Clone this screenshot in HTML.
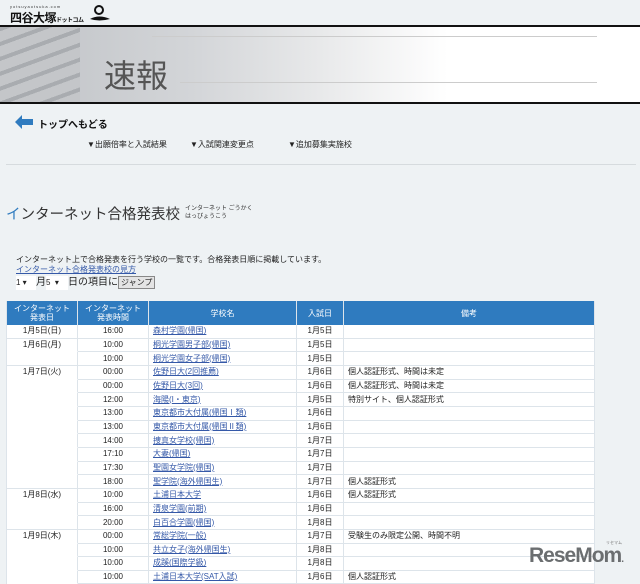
<!DOCTYPE html>
<html><head><meta charset="utf-8"><style>
body{margin:0;width:640px;height:584px;overflow:hidden;background:#eef2f4;font-family:"Liberation Sans","Noto Sans CJK JP",sans-serif;position:relative}
.a{position:absolute}
table{position:absolute;left:6px;top:301px;width:589px;border-collapse:separate;border-spacing:0;font-size:8px;table-layout:fixed;border-left:1px solid #dde4ea}
th{background:#2f7bbf;color:#fff;font-weight:normal;height:24px;line-height:9px;border-right:1px solid #dde4ea;padding:0}
td{background:#fff;border-right:1px solid #dde4ea;border-bottom:1px solid #dde4ea;padding:0;color:#222;white-space:nowrap;overflow:hidden;vertical-align:middle;height:12.67px;line-height:12px;box-sizing:content-box}
td.c{text-align:center}
td.l{padding-left:4px}
a{color:#3559a8;text-decoration:underline}
td.e{border-bottom-color:#fff}
</style></head><body>
<div class="a" style="left:10px;top:4px;font-size:4px;letter-spacing:1px;color:#333">yotsuyaotsuka.com</div>
<div class="a" style="left:10px;top:9px;font-size:12px;font-weight:bold;color:#111;white-space:nowrap;letter-spacing:-0.5px">四谷大塚<span style="font-size:6px">ドットコム</span></div>
<svg class="a" style="left:89px;top:4px" width="22" height="18"><circle cx="10" cy="6" r="4" fill="none" stroke="#111" stroke-width="2"/><path d="M1 15 Q10 10 21 15 Q10 18 1 15Z" fill="#111"/></svg>
<div class="a" style="left:0;top:25px;width:640px;height:2px;background:#111"></div>
<div class="a" style="left:0;top:27px;width:640px;height:75px;background:linear-gradient(90deg,#bfc2c6 0%,#d3d5d8 30%,#e8e9ea 50%,#fff 70%)"></div>
<div class="a" style="left:0;top:27px;width:80px;height:75px;background:repeating-linear-gradient(160deg,#a9acb0 0 4px,#c4c6c9 4px 14px)"></div>
<div class="a" style="left:152px;top:36px;width:445px;height:1px;background:#ccc"></div>
<div class="a" style="left:180px;top:82px;width:417px;height:1px;background:#ccc"></div>
<div class="a" style="left:104px;top:56px;font-size:32px;color:#555;line-height:40px">速報</div>
<div class="a" style="left:0;top:102px;width:640px;height:2px;background:#111"></div>
<svg class="a" style="left:15px;top:114px" width="18" height="16"><path d="M0 8 L7 1 L7 5 L18 5 L18 11 L7 11 L7 15Z" fill="#2f7bbf"/></svg>
<div class="a" style="left:38px;top:116px;font-size:10px;font-weight:bold;color:#111">トップへもどる</div>
<div class="a" style="left:87px;top:139px;font-size:8px;color:#222">▼出願倍率と入試結果</div>
<div class="a" style="left:190px;top:139px;font-size:8px;color:#222">▼入試関連変更点</div>
<div class="a" style="left:288px;top:139px;font-size:8px;color:#222">▼追加募集実施校</div>
<div class="a" style="left:6px;top:164px;width:630px;height:1px;background:#d6dbde"></div>
<div class="a" style="left:6px;top:203px;font-size:14.5px;color:#333;white-space:nowrap"><span style="color:#2f7bbf">イ</span>ンターネット合格発表校</div>
<div class="a" style="left:185px;top:205px;font-size:6px;line-height:8px;color:#333">インターネット ごうかく<br>はっぴょうこう</div>
<div class="a" style="left:16px;top:254px;font-size:8px;color:#222">インターネット上で合格発表を行う学校の一覧です。合格発表日順に掲載しています。</div>
<div class="a" style="left:16px;top:264px;font-size:8px"><a>インターネット合格発表校の見方</a></div>
<div class="a" style="left:16px;top:276px;font-size:10px;color:#222;line-height:14px;white-space:nowrap"><span style="display:inline-block;width:20px;background:#fff;font-size:8px">1 ▾</span>月<span style="display:inline-block;width:22px;background:#fff;font-size:8px">5 &nbsp;▾</span>日の項目に<span style="display:inline-block;border:1px solid #888;background:#e4e4e4;font-size:8px;line-height:11px;padding:0 2px">ジャンプ</span></div>
<table>
<colgroup><col style="width:71px"><col style="width:71px"><col style="width:148px"><col style="width:47px"><col></colgroup>
<tr><th>インターネット<br>発表日</th><th>インターネット<br>発表時間</th><th>学校名</th><th>入試日</th><th>備考</th></tr>
<tr><td class="c">1月5日(日)</td><td class="c">16:00</td><td class="l"><a>森村学園(帰国)</a></td><td class="c">1月5日</td><td class="l"></td></tr>
<tr><td class="c e">1月6日(月)</td><td class="c">10:00</td><td class="l"><a>桐光学園男子部(帰国)</a></td><td class="c">1月5日</td><td class="l"></td></tr>
<tr><td></td><td class="c">10:00</td><td class="l"><a>桐光学園女子部(帰国)</a></td><td class="c">1月5日</td><td class="l"></td></tr>
<tr><td class="c e">1月7日(火)</td><td class="c">00:00</td><td class="l"><a>佐野日大(2回推薦)</a></td><td class="c">1月6日</td><td class="l">個人認証形式、時間は未定</td></tr>
<tr><td class="e"></td><td class="c">00:00</td><td class="l"><a>佐野日大(3回)</a></td><td class="c">1月6日</td><td class="l">個人認証形式、時間は未定</td></tr>
<tr><td class="e"></td><td class="c">12:00</td><td class="l"><a>海陽(I・東京)</a></td><td class="c">1月5日</td><td class="l">特別サイト、個人認証形式</td></tr>
<tr><td class="e"></td><td class="c">13:00</td><td class="l"><a>東京都市大付属(帰国Ⅰ類)</a></td><td class="c">1月6日</td><td class="l"></td></tr>
<tr><td class="e"></td><td class="c">13:00</td><td class="l"><a>東京都市大付属(帰国Ⅱ類)</a></td><td class="c">1月6日</td><td class="l"></td></tr>
<tr><td class="e"></td><td class="c">14:00</td><td class="l"><a>捜真女学校(帰国)</a></td><td class="c">1月7日</td><td class="l"></td></tr>
<tr><td class="e"></td><td class="c">17:10</td><td class="l"><a>大妻(帰国)</a></td><td class="c">1月7日</td><td class="l"></td></tr>
<tr><td class="e"></td><td class="c">17:30</td><td class="l"><a>聖園女学院(帰国)</a></td><td class="c">1月7日</td><td class="l"></td></tr>
<tr><td></td><td class="c">18:00</td><td class="l"><a>聖学院(海外帰国生)</a></td><td class="c">1月7日</td><td class="l">個人認証形式</td></tr>
<tr><td class="c e">1月8日(水)</td><td class="c">10:00</td><td class="l"><a>土浦日本大学</a></td><td class="c">1月6日</td><td class="l">個人認証形式</td></tr>
<tr><td class="e"></td><td class="c">16:00</td><td class="l"><a>清泉学園(前期)</a></td><td class="c">1月6日</td><td class="l"></td></tr>
<tr><td></td><td class="c">20:00</td><td class="l"><a>白百合学園(帰国)</a></td><td class="c">1月8日</td><td class="l"></td></tr>
<tr><td class="c e">1月9日(木)</td><td class="c">00:00</td><td class="l"><a>常総学院(一般)</a></td><td class="c">1月7日</td><td class="l">受験生のみ限定公開、時間不明</td></tr>
<tr><td class="e"></td><td class="c">10:00</td><td class="l"><a>共立女子(海外帰国生)</a></td><td class="c">1月8日</td><td class="l"></td></tr>
<tr><td class="e"></td><td class="c">10:00</td><td class="l"><a>成蹊(国際学級)</a></td><td class="c">1月8日</td><td class="l"></td></tr>
<tr><td class="e"></td><td class="c">10:00</td><td class="l"><a>土浦日本大学(SAT入試)</a></td><td class="c">1月6日</td><td class="l">個人認証形式</td></tr>
</table>
<div class="a" style="left:529px;top:544px;font-size:21px;font-weight:bold;color:#6b6e70;letter-spacing:-1px">ReseMom<span style="font-size:10px">.</span></div>
<div class="a" style="left:606px;top:540px;font-size:4px;color:#777">リセマム</div>
</body></html>
